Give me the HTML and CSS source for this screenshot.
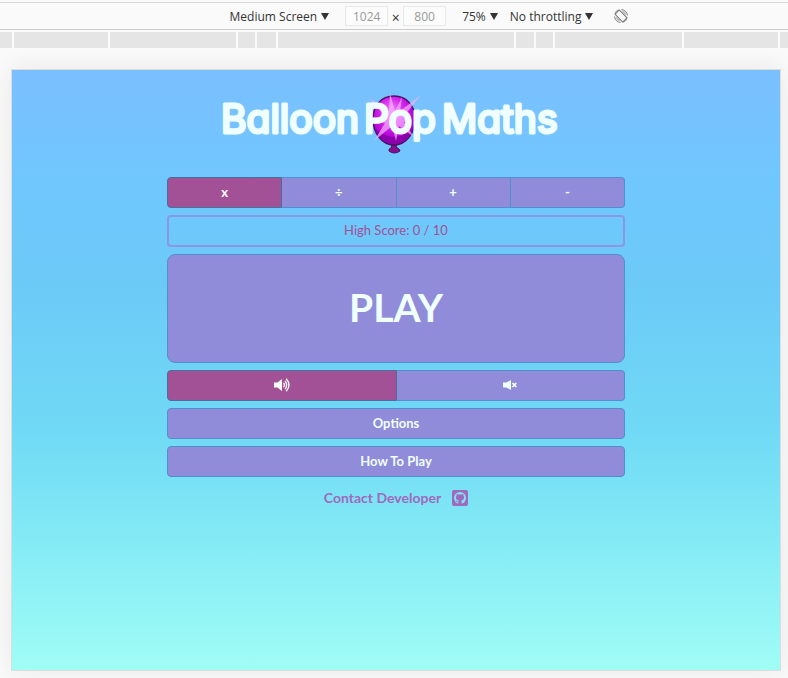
FILE: index.html
```html
<!DOCTYPE html>
<html lang="en">
<head>
<meta charset="utf-8">
<title>Balloon Pop Maths</title>
<link rel="stylesheet" href="styles.css">
</head>
<body>
<div class="toolbar">
  <button class="picker size-picker" type="button">Medium Screen <span class="arrow"></span></button>
  <input class="dimension" type="text" value="1024" aria-label="Width">
  <span class="times">×</span>
  <input class="dimension" type="text" value="800" aria-label="Height">
  <button class="picker zoom-picker" type="button">75% <span class="arrow"></span></button>
  <button class="picker" type="button">No throttling <span class="arrow"></span></button>
  <button class="rotate" type="button" aria-label="Rotate">
    <svg width="14" height="14" viewBox="0 0 14 14" fill="none" stroke="#777" stroke-width="1">
      <rect x="4" y="1.500" width="6" height="11" rx="1" transform="rotate(-45 7 7)"/>
      <path d="M7.500 .6A6.300 6.300 0 0 1 13.400 6.500M6.500 13.400A6.300 6.300 0 0 1 .6 7.500"/>
      <path d="M.6 5.500Q1.500 1.500 5.500 .6M13.400 8.500Q12.500 12.500 8.500 13.400M8.500 2.600Q11 3.200 11.500 5.600M5.500 11.400Q3 10.800 2.500 8.400" stroke-width=".8"/>
    </svg>
  </button>
</div>
<div class="ruler"><i></i><i></i><i></i><i></i><i></i><i></i><i></i><i></i><i></i><i></i><i></i></div>
<div class="stage">
  <main class="device">
    <div class="game">
      <h1 class="title">
        <svg viewBox="0 0 360 70" width="360" height="70">
          <defs>
            <radialGradient id="skin" cx=".45" cy=".32" r=".7">
              <stop offset="0" stop-color="#f08cff"/>
              <stop offset=".4" stop-color="#d528ee"/>
              <stop offset=".75" stop-color="#b000d2"/>
              <stop offset="1" stop-color="#85009f"/>
            </radialGradient>
          </defs>
          <path d="M175 58L176 60Q172 62 173 64Q178 68 184 64Q184 62 180 60L181 58Z" fill="#85108f" stroke="#4b1263"/>
          <path d="M178 9C191 9 199 19 199 32C199 46 190 58 178 58C166 58 157 46 157 32C157 19 165 9 178 9Z" fill="url(#skin)" stroke="#4b1263" stroke-width="1.500"/>
          <path d="M159 42Q178 58 197 42Q192 57 178 57Q164 57 159 42Z" fill="#8b00aa"/>
          <path d="M174 6L179 24L186 10L184 24L205 8L188 29L196 34L188 35L198 50L183 39L180 54L176 39L158 54L169 36L158 34L169 29L153 11L173 24Z" fill="#f7b0ff" opacity=".7"/>
          <g class="title-text">
            <text x="5" y="46">Balloon</text>
            <text x="148" y="46">Pop</text>
            <text x="226" y="46">Maths</text>
          </g>
        </svg>
      </h1>
      <div class="group">
        <button class="btn active" type="button">x</button>
        <button class="btn" type="button">÷</button>
        <button class="btn" type="button">+</button>
        <button class="btn" type="button">-</button>
      </div>
      <p class="score">High Score: 0 / 10</p>
      <button class="btn play" type="button">PLAY</button>
      <div class="group">
        <button class="btn active" type="button" aria-label="Sound on">
          <svg width="16" height="14" viewBox="0 0 16 14">
            <path d="M0 4.500h3.500L8 1v12L3.500 9.500H0z" fill="#fff"/>
            <path d="M9.500 4.800Q11.300 7 9.500 9.200M11 2.800Q14.300 7 11 11.200M12.200 .8Q17.800 7 12.200 13.200" fill="none" stroke="#fff" stroke-width="1.300"/>
          </svg>
        </button>
        <button class="btn" type="button" aria-label="Sound off">
          <svg width="14" height="12" viewBox="0 0 14 12">
            <path d="M0 3.500h3.500L8 1v10L3.500 8.500H0z" fill="#f0ffff"/>
            <path d="M9.500 4L13.300 8M13.300 4L9.500 8" stroke="#f0ffff" stroke-width="1.800"/>
          </svg>
        </button>
      </div>
      <button class="btn" type="button">Options</button>
      <button class="btn" type="button">How To Play</button>
      <a class="contact" href="#">Contact Developer
        <svg width="16" height="16" viewBox="0 0 16 16">
          <rect width="16" height="16" rx="2" fill="#a069bd"/>
          <circle cx="8" cy="8" r="6" fill="#7fe4f5"/>
          <path d="M6.400 14.500V12.300Q4.800 12.500 4.200 11.200L3.500 10.500Q4.500 10.300 5.200 11.300Q5.700 11.700 6.500 11.400L6.900 10.600C4.900 10.300 3.900 9.300 3.900 7.500Q3.900 6.400 4.600 5.700Q4.400 4.700 4.700 3.900Q5.500 3.900 6.500 4.600Q8 4.300 9.500 4.600Q10.500 3.900 11.300 3.900Q11.600 4.700 11.400 5.700Q12.100 6.400 12.100 7.500C12.100 9.300 11.100 10.300 9.100 10.600Q9.600 11 9.600 11.800V14.500Z" fill="#a069bd"/>
        </svg>
      </a>
    </div>
  </main>
</div>
</body>
</html>
```
FILE: styles.css
```css
* { box-sizing: border-box; }
body {
  margin: 0;
  min-height: 100vh;
  display: flex;
  flex-direction: column;
  background: #fafafa;
  font-family: "Open Sans", sans-serif;
}
button, input { font: inherit; margin: 0; }
.toolbar {
  display: flex;
  align-items: center;
  justify-content: center;
  height: 28px;
  margin-top: 2px;
  border-top: 1px solid #d6d6d6;
  border-bottom: 1px solid #ccc;
  font-size: 12px;
  color: #333;
}
.picker, .rotate {
  display: flex;
  align-items: center;
  gap: 4px;
  padding: 0;
  border: 0;
  background: none;
  color: inherit;
  white-space: nowrap;
}
.size-picker { margin: 0 16px 0 78px; }
.zoom-picker { margin: 0 12px 0 16px; }
.rotate { margin-left: 21px; margin-right: 8px; }
.arrow {
  border: 4px solid transparent;
  border-top: 7px solid #333;
  border-bottom: 0;
}
.dimension {
  width: 43px;
  height: 20px;
  padding: 0;
  border: 1px solid #e8e8e8;
  background: #fcfcfc;
  color: #999;
  text-align: center;
}
.times { width: 15px; padding-top: 2px; text-align: center; font-size: 14px; }
.ruler {
  display: grid;
  grid-template-columns: 12fr 94fr 126fr 17fr 19fr 236fr 18fr 17fr 127fr 94fr 8fr;
  gap: 2px;
  height: 16px;
  margin-top: 2px;
}
.ruler i { background: #e5e5e5; }
.stage {
  flex: 1;
  display: flex;
  padding: 21px 7px 7px 11px;
  overflow: hidden;
}
.device {
  flex: 1;
  border: 1px solid #ddd;
  box-shadow: 0 0 24px rgba(0, 0, 0, .08);
  background: linear-gradient(#7abfff, #70c7fe 18%, #6ccaf7 36%, #70d9f5 60%, #82e9f5 77%, #a0fdf6);
  font-family: Lato, sans-serif;
}
.game {
  display: flex;
  flex-direction: column;
  gap: 7px;
  max-width: 458px;
  margin: 0 auto;
}
.title {
  margin: 17px 0 13px;
  height: 70px;
  text-align: center;
}
.title svg { display: inline-block; }
.title-text {
  font: 400 39px Inter, sans-serif;
  font-feature-settings: "cv11";
  fill: #f0ffff;
  stroke: #f0ffff;
  stroke-width: 3px;
  stroke-linejoin: round;
}
.group { display: flex; }
.group .btn { flex: 1; border-radius: 0; }
.group .btn + .btn { border-left-width: 0; }
.group .btn:first-child { border-radius: 4px 0 0 4px; }
.group .btn:last-child { border-radius: 0 4px 4px 0; }
.btn {
  display: flex;
  align-items: center;
  justify-content: center;
  height: 31px;
  padding: 0 0 2px;
  border: 1px solid #538fce;
  border-radius: 4px;
  background: #918cd9;
  color: #f0ffff;
  font-size: 13px;
  font-weight: 700;
}
.btn.active { background: #a25197; border-color: #44729b; color: #fff; }
.score {
  height: 32px;
  margin: 0;
  border: 2px solid #8b98e1;
  border-radius: 4px;
  color: #a25197;
  font-size: 13px;
  line-height: 27px;
  text-align: center;
}
.btn.play { height: 109px; padding-bottom: 4px; border-radius: 8px; font-size: 39px; }
.contact {
  display: flex;
  align-items: center;
  justify-content: center;
  gap: 11px;
  margin-top: 4px;
  color: #a069bd;
  font-size: 14px;
  font-weight: 700;
  line-height: 20px;
  text-decoration: none;
}
```
